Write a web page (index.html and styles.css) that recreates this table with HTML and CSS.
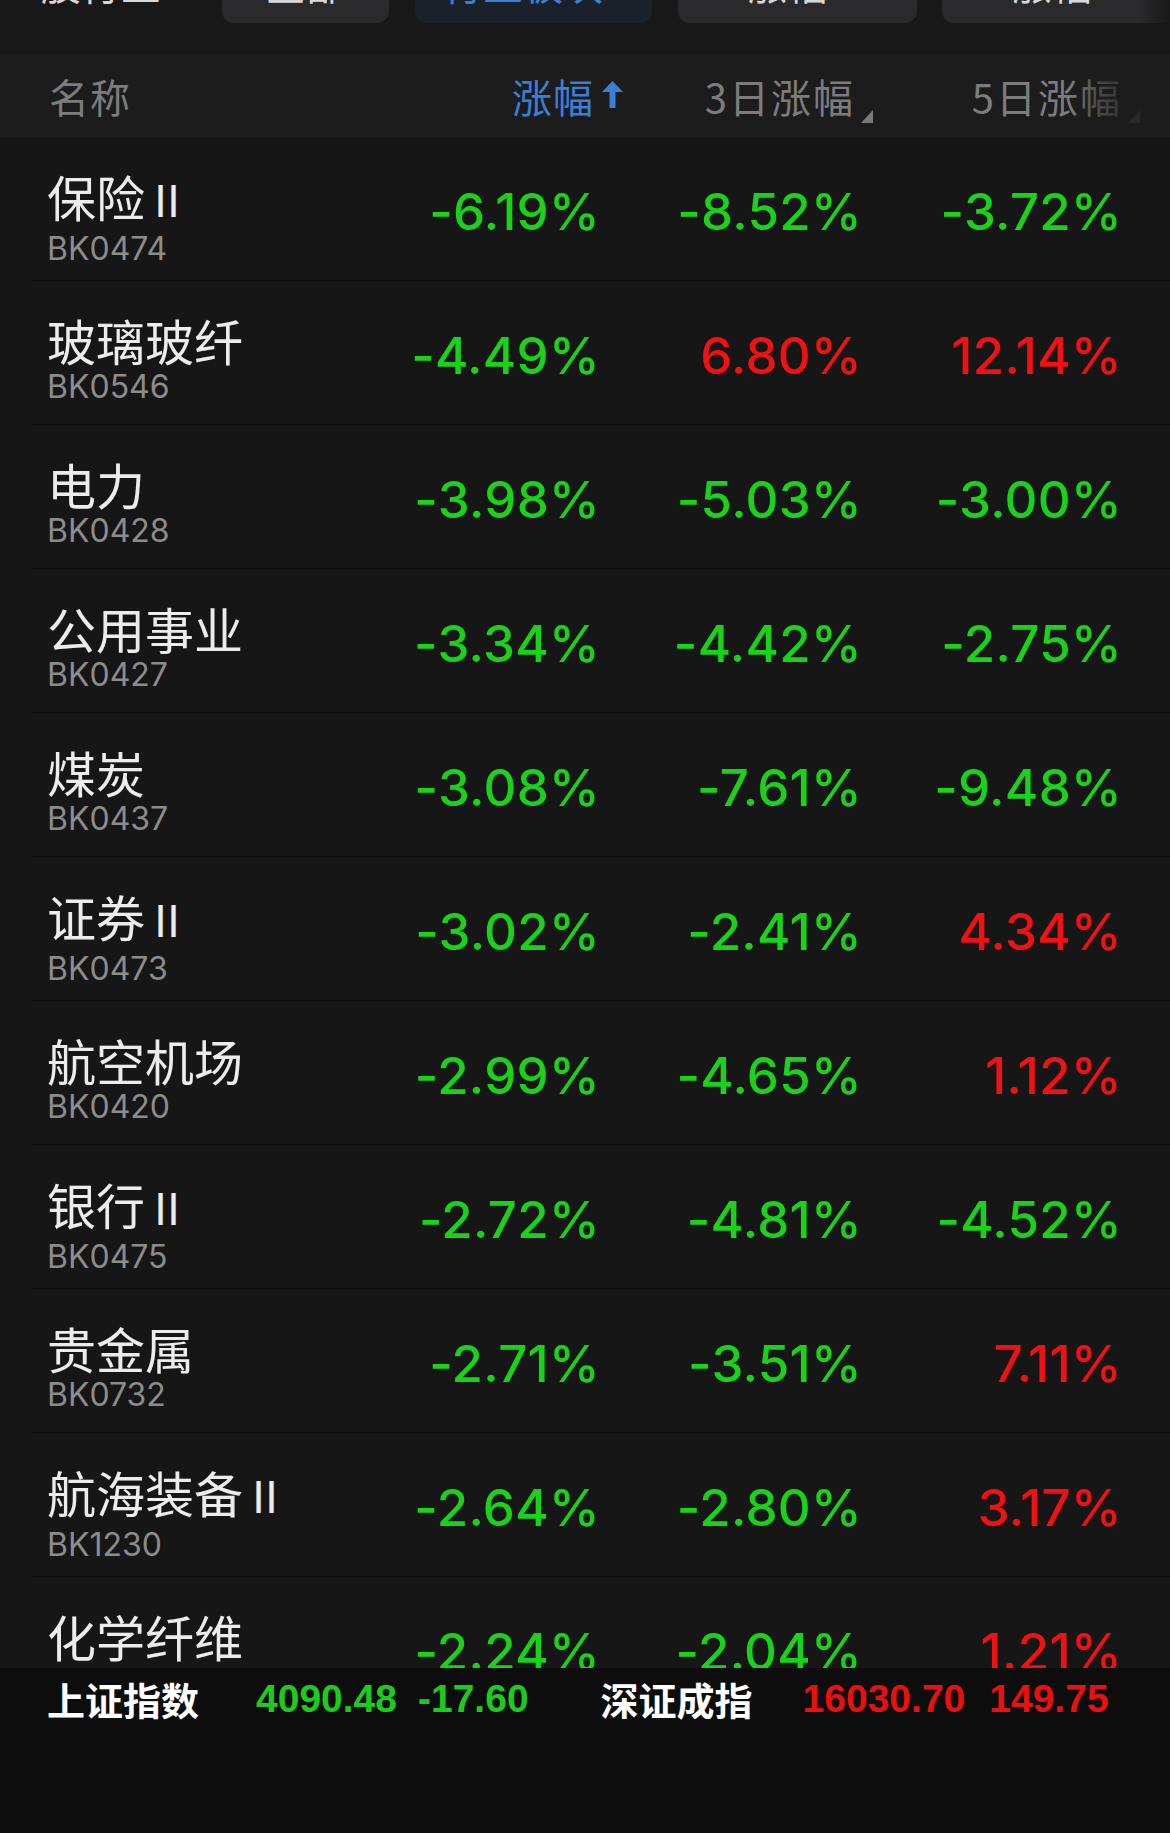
FILE: index.html
```html
<!DOCTYPE html>
<html lang="zh-CN">
<head>
<meta charset="utf-8">
<title>板块涨幅</title>
<link rel="stylesheet" href="styles.css">
</head>
<body>
<div class="page">
  <div class="tabs">
    <div class="tab tab-w1 tab-plain"><span class="tab-text">A股行业</span><span class="tab-caret">▾</span></div>
    <div class="tab tab-w2"><span class="tab-text">全部</span></div>
    <div class="tab tab-w3 tab-active"><span class="tab-text">行业板块</span><span class="tab-caret">▾</span></div>
    <div class="tab tab-w4"><span class="tab-text">涨幅</span><span class="tab-caret">▾</span></div>
    <div class="tab tab-w5"><span class="tab-text">涨幅</span><span class="tab-caret">▾</span></div>
  </div>

  <div class="thead">
    <div class="h-name">名称</div>
    <div class="h-col h-active">涨幅<svg class="up-arrow" width="21" height="27" viewBox="0 0 21 27"><polygon points="10.5,0 21,11 13.5,11 13.5,27 7.5,27 7.5,11 0,11" fill="#3a7fd3"/></svg></div>
    <div class="h-col">3日涨幅<svg class="sort-tri" width="12" height="13" viewBox="0 0 12 13"><polygon points="12,0 12,13 0,13" fill="#7a7a7a"/></svg></div>
    <div class="h-col">5日涨幅<svg class="sort-tri" width="12" height="13" viewBox="0 0 12 13"><polygon points="12,0 12,13 0,13" fill="#7a7a7a"/></svg></div>
  </div>

  <div class="list">
    <div class="row"><div class="name"><div class="cn">保险<span class="roman">Ⅱ</span></div><div class="code">BK0474</div></div><div class="num down">-6.19%</div><div class="num down">-8.52%</div><div class="num down">-3.72%</div></div>
    <div class="row"><div class="name"><div class="cn">玻璃玻纤</div><div class="code">BK0546</div></div><div class="num down">-4.49%</div><div class="num up">6.80%</div><div class="num up">12.14%</div></div>
    <div class="row"><div class="name"><div class="cn">电力</div><div class="code">BK0428</div></div><div class="num down">-3.98%</div><div class="num down">-5.03%</div><div class="num down">-3.00%</div></div>
    <div class="row"><div class="name"><div class="cn">公用事业</div><div class="code">BK0427</div></div><div class="num down">-3.34%</div><div class="num down">-4.42%</div><div class="num down">-2.75%</div></div>
    <div class="row"><div class="name"><div class="cn">煤炭</div><div class="code">BK0437</div></div><div class="num down">-3.08%</div><div class="num down">-7.61%</div><div class="num down">-9.48%</div></div>
    <div class="row"><div class="name"><div class="cn">证券<span class="roman">Ⅱ</span></div><div class="code">BK0473</div></div><div class="num down">-3.02%</div><div class="num down">-2.41%</div><div class="num up">4.34%</div></div>
    <div class="row"><div class="name"><div class="cn">航空机场</div><div class="code">BK0420</div></div><div class="num down">-2.99%</div><div class="num down">-4.65%</div><div class="num up">1.12%</div></div>
    <div class="row"><div class="name"><div class="cn">银行<span class="roman">Ⅱ</span></div><div class="code">BK0475</div></div><div class="num down">-2.72%</div><div class="num down">-4.81%</div><div class="num down">-4.52%</div></div>
    <div class="row"><div class="name"><div class="cn">贵金属</div><div class="code">BK0732</div></div><div class="num down">-2.71%</div><div class="num down">-3.51%</div><div class="num up">7.11%</div></div>
    <div class="row"><div class="name"><div class="cn">航海装备<span class="roman">Ⅱ</span></div><div class="code">BK1230</div></div><div class="num down">-2.64%</div><div class="num down">-2.80%</div><div class="num up">3.17%</div></div>
    <div class="row"><div class="name"><div class="cn">化学纤维</div><div class="code">BK0507</div></div><div class="num down">-2.24%</div><div class="num down">-2.04%</div><div class="num up">1.21%</div></div>
  </div>

  <div class="footer">
    <span class="idx-name">上证指数</span>
    <span class="idx-val f-down v1">4090.48</span>
    <span class="idx-val f-down v2">-17.60</span>
    <span class="idx-name n2">深证成指</span>
    <span class="idx-val f-up v3">16030.70</span>
    <span class="idx-val f-up v4">149.75</span>
  </div>
</div>
</body>
</html>
```

FILE: styles.css
```css
html, body {
  margin: 0;
  padding: 0;
}

body {
  width: 1170px;
  height: 1833px;
  overflow: hidden;
  background: #181818;
  font-family: Inter, "Noto Sans CJK SC", sans-serif;
  color: #e6e6e6;
}

.page {
  display: flex;
  flex-direction: column;
  height: 1833px;
}

/* top segmented tabs (scrolled mostly out of view) */
.tabs {
  position: relative;
  display: flex;
  height: 60px;
  margin-top: -37px;
  flex-shrink: 0;
}

.tabs::after {
  content: "";
  position: absolute;
  top: 0;
  right: 0;
  width: 30px;
  height: 60px;
  background: linear-gradient(to right, rgba(24,24,24,0), #181818);
}

.tab {
  display: flex;
  justify-content: center;
  align-items: flex-start;
  gap: 6px;
  height: 60px;
  border-radius: 0 0 12px 12px;
  background: #2a2a2c;
  font-family: "Noto Sans CJK SC", sans-serif;
  font-size: 40px;
  line-height: 40px;
  color: #d8d8d8;
  overflow: hidden;
  flex-shrink: 0;
}

.tab-plain {
  background: transparent;
}

.tab-w1 { width: 198px; }
.tab-w2 { width: 167px; margin-left: 24px; }
.tab-w3 { width: 237px; margin-left: 26px; }
.tab-w4 { width: 239px; margin-left: 26px; }
.tab-w5 { width: 240px; margin-left: 25px; }

.tab-active {
  background: #1a212b;
  color: #3a7fd3;
}

.tab-caret {
  color: #666;
  font-size: 30px;
}

/* header */
.thead {
  position: relative;
  display: grid;
  grid-template-columns: 300px 278px 246px 267px;
  align-items: center;
  height: 83px;
  margin-top: 31px;
  padding-left: 49px;
  background: #1c1c1c;
  font-family: "Noto Sans CJK SC", sans-serif;
  font-size: 40px;
  line-height: 48px;
  letter-spacing: 2px;
  color: #7c7c7c;
  flex-shrink: 0;
}

.thead::after {
  content: "";
  position: absolute;
  top: 0;
  right: 0;
  width: 100px;
  height: 83px;
  background: linear-gradient(to right, rgba(28,28,28,0) 0%, rgba(28,28,28,0.55) 30%, rgba(28,28,28,0.85) 60%, #1c1c1c 100%);
}

.h-name {
  letter-spacing: 1px;
}

.h-col {
  display: flex;
  justify-self: end;
  align-items: center;
}

.h-active {
  color: #3a7fd3;
  letter-spacing: 1px;
}

.up-arrow {
  margin-left: 8px;
  margin-right: 4px;
  margin-top: -2px;
}

.sort-tri {
  align-self: flex-end;
  margin-left: 6px;
  margin-bottom: -3px;
}

/* list */
.list {
  flex: 1;
  overflow: hidden;
  background: #161616;
}

.row {
  display: grid;
  grid-template-columns: 300px 248px 262px 260px;
  height: 143px;
  margin-left: 32px;
  padding-left: 15px;
  border-bottom: 1px solid #0b0b0b;
}

.name {
  padding-top: 35px;
}

.cn {
  font-family: "Noto Sans CJK SC", sans-serif;
  font-size: 49px;
  line-height: 48px;
  color: #ececec;
  white-space: nowrap;
}

.roman {
  font-family: "Liberation Sans", sans-serif;
  font-size: 44px;
}

.code {
  margin-top: 3px;
  font-size: 32px;
  line-height: 40px;
  color: #8c8c8c;
}

.num {
  justify-self: end;
  align-self: center;
  padding-top: 6px;
  margin-right: -5px;
  font-size: 51px;
  font-weight: 500;
  line-height: 60px;
  letter-spacing: 0.3px;
}

.down { color: #19d319; }
.up { color: #f01212; }

/* bottom index bar */
.footer {
  display: flex;
  align-items: flex-start;
  height: 165px;
  padding-top: 11px;
  padding-left: 47px;
  box-sizing: border-box;
  background: #0d0d0d;
  flex-shrink: 0;
  line-height: 40px;
}

.idx-name {
  font-family: "Noto Sans CJK SC", sans-serif;
  font-weight: 700;
  font-size: 38px;
  color: #ffffff;
}

.idx-val {
  font-family: "Liberation Sans", sans-serif;
  font-weight: 700;
  font-size: 39px;
}

.f-down { color: #1ccc1c; }
.f-up { color: #e81010; }

.v1 { margin-left: 57px; }
.v2 { margin-left: 21px; }
.n2 { margin-left: 72px; }
.v3 { margin-left: 50px; }
.v4 { margin-left: 24px; }
```
